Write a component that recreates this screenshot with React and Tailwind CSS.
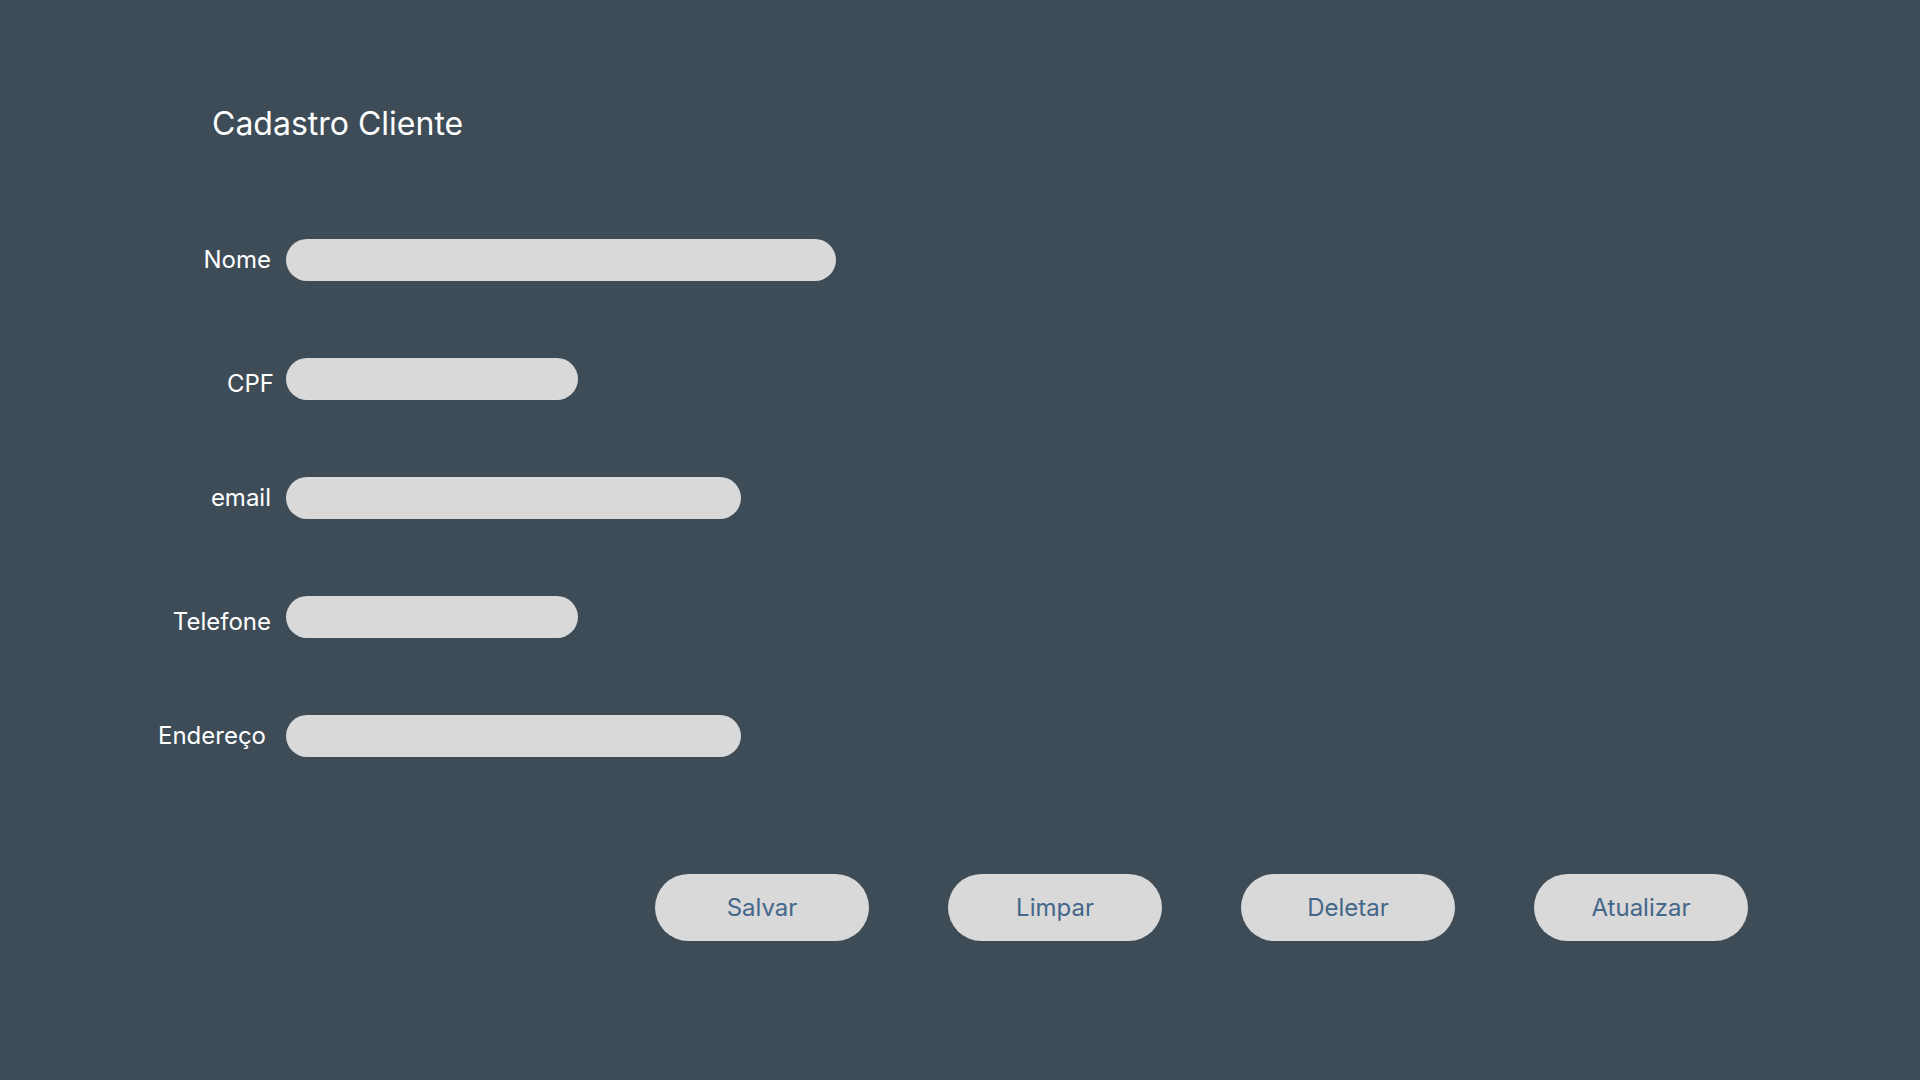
export default function App() {
  const rows = [
    { label: "Nome", w: "w-[550px]", lab: "w-[272px] pr-[1px]", gap: "ml-[14px]" },
    { label: "CPF", w: "w-[292px]", lab: "w-[274px] pt-[10px]", gap: "ml-[12px]" },
    { label: "email", w: "w-[455px]", lab: "w-[272px] pr-[1px]", gap: "ml-[14px]" },
    { label: "Telefone", w: "w-[292px]", lab: "w-[272px] pt-[10px] pr-[1px]", gap: "ml-[14px]" },
    { label: "Endereço", w: "w-[455px]", lab: "w-[272px] pr-[6px]", gap: "ml-[14px]" },
  ];
  const buttons = ["Salvar", "Limpar", "Deletar", "Atualizar"];
  return (
    <div className="min-h-screen w-full bg-[#3e4c57] pt-[104px] font-['Inter',sans-serif]">
      <h1 className="ml-[212px] text-[32px] leading-[40px] text-white font-normal">
        Cadastro Cliente
      </h1>
      <div className="mt-[95px] flex flex-col gap-[77px]">
        {rows.map((r) => (
          <div key={r.label} className="flex items-center">
            <label className={`text-right text-[24px] leading-[30px] text-white ${r.lab}`}>
              {r.label}
            </label>
            <div className={`h-[42px] rounded-full bg-[#d9d9d9] ${r.gap} ${r.w}`} />
          </div>
        ))}
      </div>
      <div className="mt-[117px] ml-[655px] flex gap-[79px]">
        {buttons.map((b) => (
          <button
            key={b}
            className="h-[67px] w-[214px] rounded-full bg-[#d9d9d9] text-[24px] text-[#44678a]"
          >
            {b}
          </button>
        ))}
      </div>
    </div>
  );
}
